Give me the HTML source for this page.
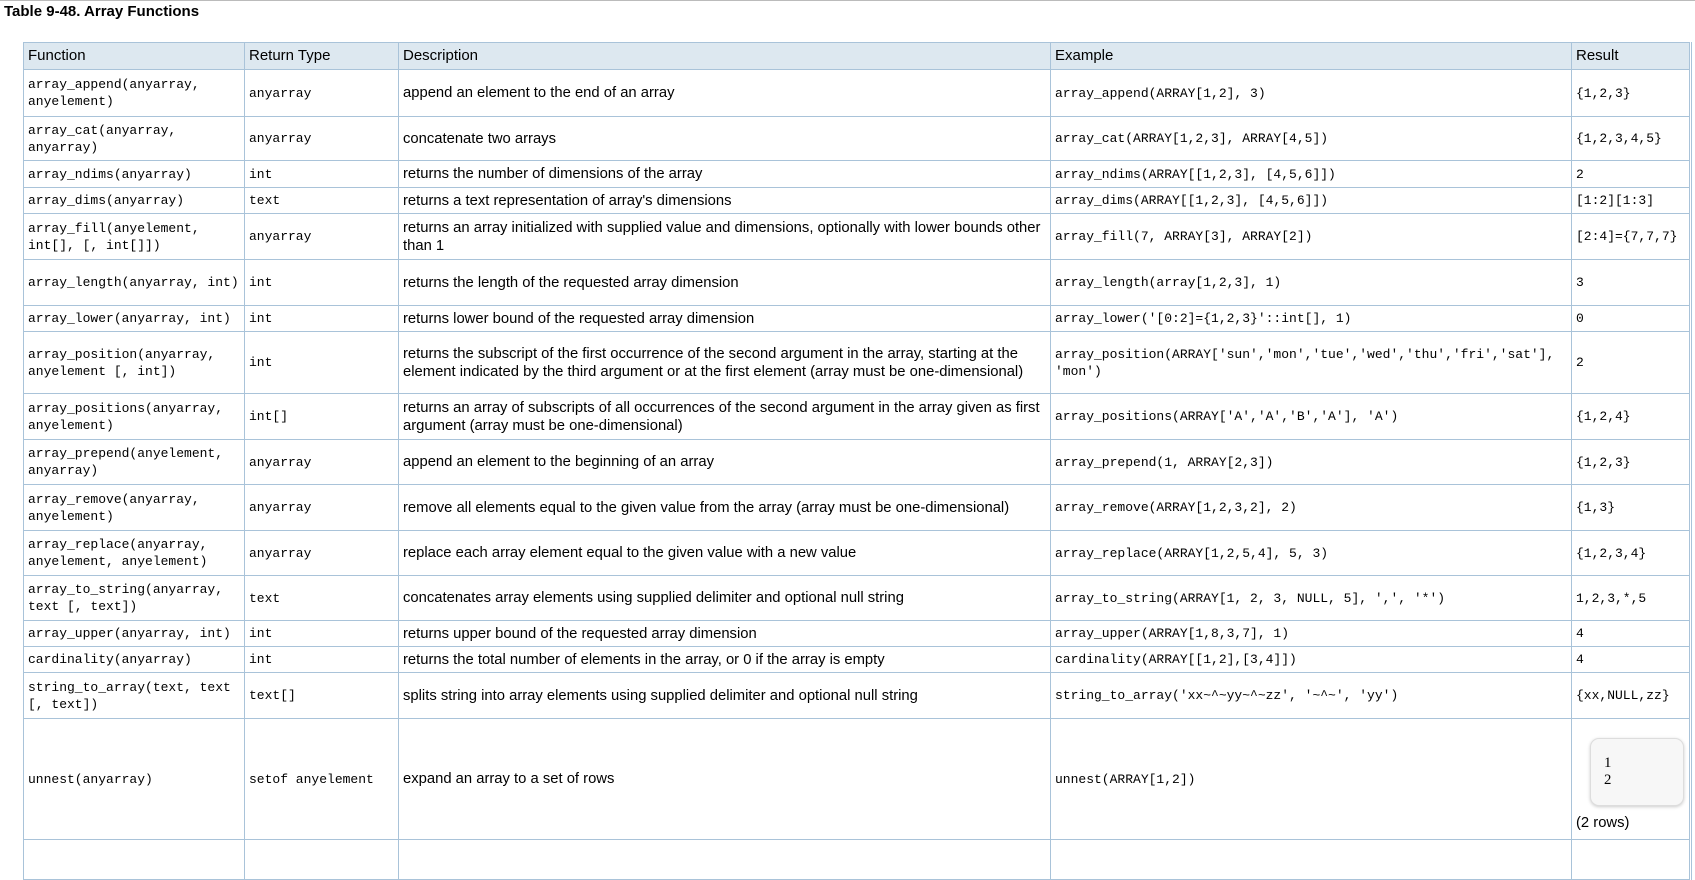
<!DOCTYPE html>
<html><head><meta charset="utf-8"><style>
body{margin:0;background:#fff;width:1695px;height:841px;overflow:hidden;position:relative;font-family:"Liberation Sans",sans-serif;font-size:14.8px;color:#000}
.top{position:absolute;left:0;top:0;width:1695px;height:1px;background:#bbb}
h1{position:absolute;left:4px;top:3px;margin:0;font-size:15px;font-weight:bold}
table{position:absolute;left:23px;top:42px;border-collapse:collapse;table-layout:fixed;width:1667px;border-right:3px double #a9c3d9}
td,th{border:1px solid #a9c3d9;padding:0 4px;vertical-align:middle;text-align:left;line-height:18px;overflow:hidden}
th{background:#dde8f0;font-weight:normal;font-size:15px;height:26px}
.m{font-family:"Liberation Mono",monospace;font-size:13px;line-height:17px}
.box{margin:12px 0 8px 14px;width:66px;border:1px solid #ddd;border-radius:9px;background:#f7f7f7;box-shadow:0 1px 3px #ccc;padding:16px 13px;font-family:"Liberation Serif",serif;line-height:17px}
</style></head><body>
<div class="top"></div>
<h1>Table 9-48. Array Functions</h1>
<table>
<col style="width:221px"><col style="width:154px"><col style="width:652px"><col style="width:521px"><col style="width:119px">
<tr><th>Function</th><th>Return Type</th><th>Description</th><th>Example</th><th>Result</th></tr>
<tr style="height:47px"><td class="m">array_append(anyarray, anyelement)</td><td class="m">anyarray</td><td>append an element to the end of an array</td><td class="m">array_append(ARRAY[1,2], 3)</td><td class="m">{1,2,3}</td></tr>
<tr style="height:44px"><td class="m">array_cat(anyarray, anyarray)</td><td class="m">anyarray</td><td>concatenate two arrays</td><td class="m">array_cat(ARRAY[1,2,3], ARRAY[4,5])</td><td class="m">{1,2,3,4,5}</td></tr>
<tr style="height:27px"><td class="m">array_ndims(anyarray)</td><td class="m">int</td><td>returns the number of dimensions of the array</td><td class="m">array_ndims(ARRAY[[1,2,3], [4,5,6]])</td><td class="m">2</td></tr>
<tr style="height:26px"><td class="m">array_dims(anyarray)</td><td class="m">text</td><td>returns a text representation of array's dimensions</td><td class="m">array_dims(ARRAY[[1,2,3], [4,5,6]])</td><td class="m">[1:2][1:3]</td></tr>
<tr style="height:46px"><td class="m">array_fill(anyelement, int[], [, int[]])</td><td class="m">anyarray</td><td>returns an array initialized with supplied value and dimensions, optionally with lower bounds other than 1</td><td class="m">array_fill(7, ARRAY[3], ARRAY[2])</td><td class="m">[2:4]={7,7,7}</td></tr>
<tr style="height:46px"><td class="m">array_length(anyarray, int)</td><td class="m">int</td><td>returns the length of the requested array dimension</td><td class="m">array_length(array[1,2,3], 1)</td><td class="m">3</td></tr>
<tr style="height:26px"><td class="m" style="white-space:nowrap">array_lower(anyarray, int)</td><td class="m">int</td><td>returns lower bound of the requested array dimension</td><td class="m">array_lower('[0:2]={1,2,3}'::int[], 1)</td><td class="m">0</td></tr>
<tr style="height:62px"><td class="m">array_position(anyarray, anyelement [, int])</td><td class="m">int</td><td>returns the subscript of the first occurrence of the second argument in the array, starting at the element indicated by the third argument or at the first element (array must be one-dimensional)</td><td class="m">array_position(ARRAY['sun','mon','tue','wed','thu','fri','sat'], 'mon')</td><td class="m">2</td></tr>
<tr style="height:46px"><td class="m">array_positions(anyarray, anyelement)</td><td class="m">int[]</td><td>returns an array of subscripts of all occurrences of the second argument in the array given as first argument (array must be one-dimensional)</td><td class="m">array_positions(ARRAY['A','A','B','A'], 'A')</td><td class="m">{1,2,4}</td></tr>
<tr style="height:45px"><td class="m">array_prepend(anyelement, anyarray)</td><td class="m">anyarray</td><td>append an element to the beginning of an array</td><td class="m">array_prepend(1, ARRAY[2,3])</td><td class="m">{1,2,3}</td></tr>
<tr style="height:46px"><td class="m">array_remove(anyarray, anyelement)</td><td class="m">anyarray</td><td>remove all elements equal to the given value from the array (array must be one-dimensional)</td><td class="m">array_remove(ARRAY[1,2,3,2], 2)</td><td class="m">{1,3}</td></tr>
<tr style="height:45px"><td class="m">array_replace(anyarray, anyelement, anyelement)</td><td class="m">anyarray</td><td>replace each array element equal to the given value with a new value</td><td class="m">array_replace(ARRAY[1,2,5,4], 5, 3)</td><td class="m">{1,2,3,4}</td></tr>
<tr style="height:45px"><td class="m">array_to_string(anyarray, text [, text])</td><td class="m">text</td><td>concatenates array elements using supplied delimiter and optional null string</td><td class="m">array_to_string(ARRAY[1, 2, 3, NULL, 5], ',', '*')</td><td class="m">1,2,3,*,5</td></tr>
<tr style="height:26px"><td class="m" style="white-space:nowrap">array_upper(anyarray, int)</td><td class="m">int</td><td>returns upper bound of the requested array dimension</td><td class="m">array_upper(ARRAY[1,8,3,7], 1)</td><td class="m">4</td></tr>
<tr style="height:26px"><td class="m">cardinality(anyarray)</td><td class="m">int</td><td>returns the total number of elements in the array, or 0 if the array is empty</td><td class="m">cardinality(ARRAY[[1,2],[3,4]])</td><td class="m">4</td></tr>
<tr style="height:46px"><td class="m">string_to_array(text, text [, text])</td><td class="m">text[]</td><td>splits string into array elements using supplied delimiter and optional null string</td><td class="m">string_to_array('xx~^~yy~^~zz', '~^~', 'yy')</td><td class="m">{xx,NULL,zz}</td></tr>
<tr style="height:121px"><td class="m">unnest(anyarray)</td><td class="m">setof anyelement</td><td>expand an array to a set of rows</td><td class="m">unnest(ARRAY[1,2])</td><td><div class="box">1<br>2</div>(2 rows)</td></tr>
<tr style="height:40px"><td></td><td></td><td></td><td></td><td></td></tr>
</table>
</body></html>
